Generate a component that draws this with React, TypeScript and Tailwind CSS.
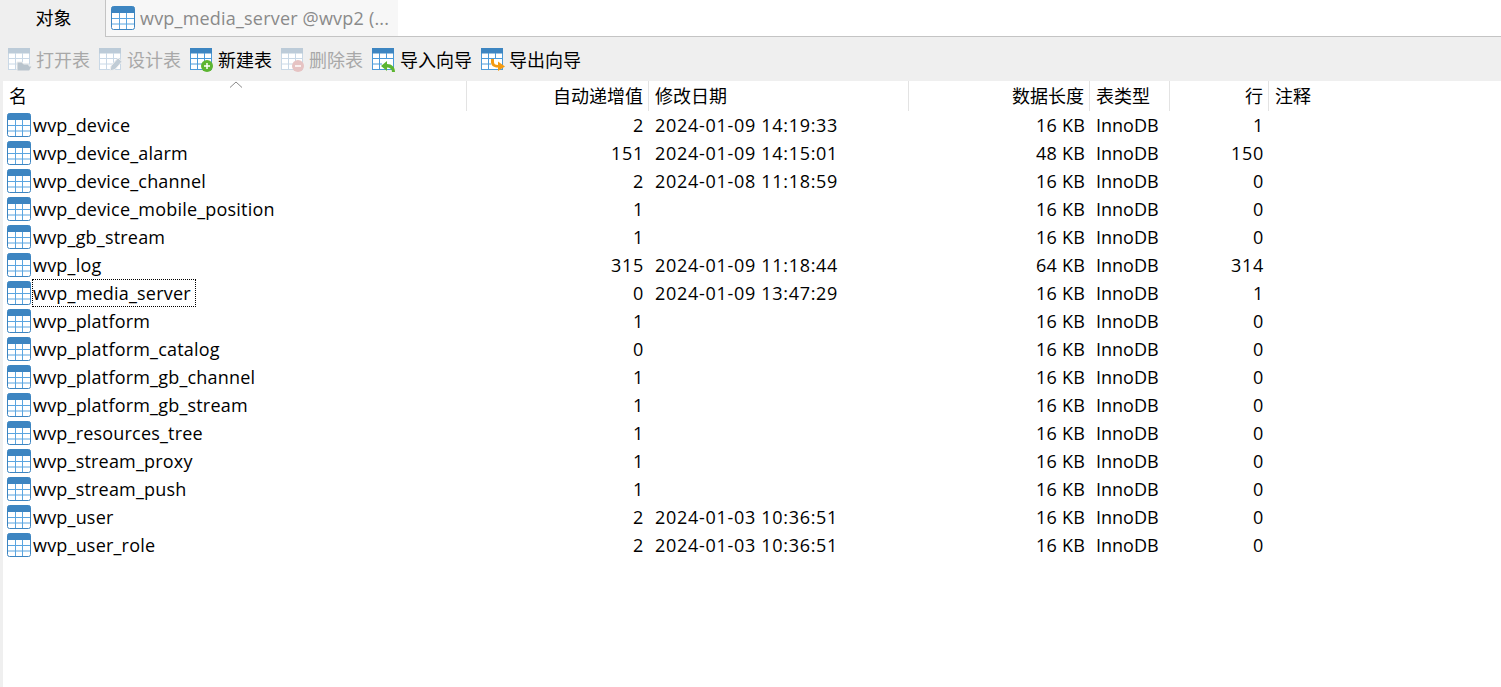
const rows = [
  { name: 'wvp_device', auto: '2', date: '2024-01-09 14:19:33', size: '16 KB', count: '1' },
  { name: 'wvp_device_alarm', auto: '151', date: '2024-01-09 14:15:01', size: '48 KB', count: '150' },
  { name: 'wvp_device_channel', auto: '2', date: '2024-01-08 11:18:59', size: '16 KB', count: '0' },
  { name: 'wvp_device_mobile_position', auto: '1', date: '', size: '16 KB', count: '0' },
  { name: 'wvp_gb_stream', auto: '1', date: '', size: '16 KB', count: '0' },
  { name: 'wvp_log', auto: '315', date: '2024-01-09 11:18:44', size: '64 KB', count: '314' },
  { name: 'wvp_media_server', auto: '0', date: '2024-01-09 13:47:29', size: '16 KB', count: '1' },
  { name: 'wvp_platform', auto: '1', date: '', size: '16 KB', count: '0' },
  { name: 'wvp_platform_catalog', auto: '0', date: '', size: '16 KB', count: '0' },
  { name: 'wvp_platform_gb_channel', auto: '1', date: '', size: '16 KB', count: '0' },
  { name: 'wvp_platform_gb_stream', auto: '1', date: '', size: '16 KB', count: '0' },
  { name: 'wvp_resources_tree', auto: '1', date: '', size: '16 KB', count: '0' },
  { name: 'wvp_stream_proxy', auto: '1', date: '', size: '16 KB', count: '0' },
  { name: 'wvp_stream_push', auto: '1', date: '', size: '16 KB', count: '0' },
  { name: 'wvp_user', auto: '2', date: '2024-01-03 10:36:51', size: '16 KB', count: '0' },
  { name: 'wvp_user_role', auto: '2', date: '2024-01-03 10:36:51', size: '16 KB', count: '0' },
];

const gridCols = 'grid grid-cols-[464px_182px_260px_181px_80px_99px_1fr]';

type ToolKind = 'open' | 'design' | 'new' | 'delete' | 'import' | 'export';

// Table glyph used in the tab and on every row
function TableIcon() {
  return (
    <svg width="24" height="24" viewBox="0 0 24 24" className="shrink-0">
      <rect x="0.5" y="0.5" width="23" height="23" rx="2" fill="#fff" stroke="#3d85c1" />
      <path d="M0.500 7V2.500Q0.500 0.500 2.500 0.500h19Q23.500 0.500 23.500 2.500V7z" fill="#3d85c1" />
      <path d="M1 12.500h22M1 18h22M8.500 7v16M15.500 7v16" stroke="#5aa5e0" fill="none" />
    </svg>
  );
}

function ToolIcon({ kind }: { kind: ToolKind }) {
  const faded = kind === 'open' || kind === 'design' || kind === 'delete';
  const line = faded ? '#c9d8e6' : '#4b9ad9';
  return (
    <svg width="24" height="24" viewBox="0 0 24 24" className="shrink-0">
      <rect x="0.5" y="0.5" width="21" height="21" fill="#fff" stroke={line} />
      <rect x="0" y="0" width="22" height="5.500" fill={faded ? '#bccbd8' : '#3d85c1'} />
      <path d="M1 10.500h20M1 16h20M7.500 5v16M14.500 5v16" stroke={line} fill="none" />
      {kind === 'open' && <path d="M9 23v-9h5l1.500 2H21v2h3l-2.500 5z" fill="#b9c4cd" stroke="#efefef" />}
      {kind === 'design' && <path d="M11 23l1-5 7-8 4 3.500-7 8z" fill="#c0ccd6" stroke="#efefef" />}
      {kind === 'new' && (
        <>
          <circle cx="17" cy="18" r="6" fill="#5cb531" />
          <path d="M14 18h6M17 15v6" stroke="#fff" strokeWidth="1.500" />
        </>
      )}
      {kind === 'delete' && (
        <>
          <circle cx="17" cy="18" r="6" fill="#e6c3c3" />
          <path d="M14 18h6" stroke="#fff" strokeWidth="1.500" />
        </>
      )}
      {kind === 'import' && (
        <>
          <rect x="10" y="11" width="11" height="10" fill="#fff" />
          <path d="M9 18l6-5v3c5 0 8 3 8 8h-3c0-3-2-4.500-5-4.500v3.500z" fill="#5cb531" />
        </>
      )}
      {kind === 'export' && (
        <>
          <rect x="10" y="11" width="11" height="10" fill="#fff" />
          <path d="M10 11h3v3c0 2 1 3 4 3v-3.500l7 5-7 4.500v-3.500c-5 0-7-2.500-7-5.500z" fill="#f39a12" />
        </>
      )}
    </svg>
  );
}

function ToolButton({ kind, label, width }: { kind: ToolKind; label: string; width: string }) {
  const faded = kind === 'open' || kind === 'design' || kind === 'delete';
  return (
    <div className={`flex items-center gap-[4px] ${width} ${faded ? 'text-[#a8a8a8]' : 'text-black'}`}>
      <ToolIcon kind={kind} />
      <span className="text-[18px] leading-[24px] whitespace-nowrap">{label}</span>
    </div>
  );
}

function HeaderCell({ children, right = false, divider = true }: { children?: React.ReactNode; right?: boolean; divider?: boolean }) {
  return (
    <div className={`h-[30px] flex items-center pt-[1px] pl-[6px] pr-[5px] ${right ? 'justify-end' : ''} ${divider ? 'border-r border-[#e3e3e3]' : ''}`}>
      {children}
    </div>
  );
}

export default function App() {
  return (
    <div
      className="w-[1501px] h-[687px] overflow-hidden bg-[#efefef] text-[18px] text-black flex flex-col"
      style={{ fontFamily: '"Open Sans", "Noto Sans CJK SC", sans-serif' }}
    >
      {/* tab strip */}
      <div className="h-[37px] flex bg-white border-b border-[#c4c4c4] shrink-0">
        <div className="w-[105px] h-[37px] flex items-center justify-center bg-[#efefef] pl-[2px]">对象</div>
        <div className="w-[293px] flex items-center gap-[5px] pl-[5px] bg-[#f7f7f7] border-l border-[#c4c4c4] text-[#8a8a8a]">
          <TableIcon />
          <span className="whitespace-nowrap tracking-[0.2px]">wvp_media_server @wvp2 (...</span>
        </div>
      </div>

      {/* toolbar */}
      <div className="h-[44px] flex items-center pl-[8px] pt-[2px] shrink-0">
        <ToolButton kind="open" label="打开表" width="w-[91px]" />
        <ToolButton kind="design" label="设计表" width="w-[91px]" />
        <ToolButton kind="new" label="新建表" width="w-[91px]" />
        <ToolButton kind="delete" label="删除表" width="w-[91px]" />
        <ToolButton kind="import" label="导入向导" width="w-[109px]" />
        <ToolButton kind="export" label="导出向导" width="w-[109px]" />
      </div>

      {/* table */}
      <div className="flex-1 ml-[3px] bg-white">
        <div className={`relative ${gridCols} h-[30px]`}>
          <svg width="14" height="7" viewBox="0 0 14 7" className="absolute left-[226px] top-0">
            <path d="M1 6.500L7 1l6 5.500" stroke="#8a8a8a" fill="none" />
          </svg>
          <HeaderCell>名</HeaderCell>
          <HeaderCell right>自动递增值</HeaderCell>
          <HeaderCell>修改日期</HeaderCell>
          <HeaderCell right>数据长度</HeaderCell>
          <HeaderCell>表类型</HeaderCell>
          <HeaderCell right>行</HeaderCell>
          <HeaderCell divider={false}>注释</HeaderCell>
        </div>
        {rows.map((row) => (
          <div key={row.name} className={`${gridCols} h-[28px] items-center`}>
            <div className="flex items-center pl-[4px] gap-[1px]">
              <TableIcon />
              <span
                className={`leading-[28px] pl-[1px] pr-[5px] whitespace-nowrap tracking-[0.2px] ${
                  row.name === 'wvp_media_server' ? 'outline-1 outline-dotted outline-black -outline-offset-1' : ''
                }`}
              >
                {row.name}
              </span>
            </div>
            <div className="text-right pr-[5px] tracking-[0.7px]">{row.auto}</div>
            <div className="pl-[6px] tracking-[0.7px]">{row.date}</div>
            <div className="text-right pr-[5px] tracking-[0.2px]">{row.size}</div>
            <div className="pl-[6px]">InnoDB</div>
            <div className="text-right pr-[5px] tracking-[0.7px]">{row.count}</div>
            <div />
          </div>
        ))}
      </div>
    </div>
  );
}
